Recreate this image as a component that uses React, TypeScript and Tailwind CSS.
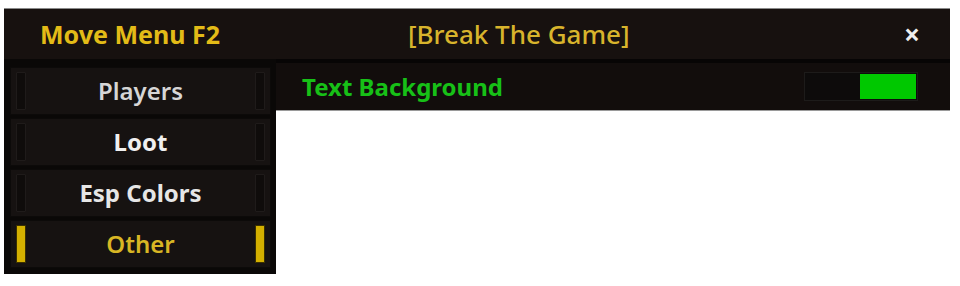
import React from "react";

const items = [
  { label: "Players", active: false, cls: "font-semibold text-[#d6d6d6]" },
  { label: "Loot", active: false, cls: "font-bold text-[#f0f0f0]" },
  { label: "Esp Colors", active: false, cls: "font-bold text-[#e6e6e6]" },
  { label: "Other", active: true, cls: "font-semibold text-[#d8b624]" },
];

function Bar({ active }: { active: boolean }) {
  return (
    <div
      className={
        active
          ? "w-[10px] h-[38px] bg-[#d4b000] border border-[#3a3000] rounded-[1px]"
          : "w-[10px] h-[38px] bg-[#0f0c0b] border border-[#1f1b1a] rounded-[1px]"
      }
    />
  );
}

export default function App() {
  return (
    <div className="w-[960px] h-[286px] bg-white pt-[8px] pl-[4px] font-['Noto_Sans',sans-serif]">
      <div className="w-[946px] border-t border-[#8a8a8a]">
        <div className="h-[50px] bg-[#17110f] flex items-center relative">
          <span className="ml-[36px] text-[25px] font-bold text-[#e3bb17] leading-none">
            Move Menu F2
          </span>
          <span className="ml-[188px] text-[26px] text-[#d8b42c] font-medium leading-none">
            [Break The Game]
          </span>
          <span className="ml-auto mr-[30px] text-[28px] font-bold text-[#eeeeee] leading-none">
            ×
          </span>
        </div>
        <div className="flex items-start">
          <div className="w-[272px] bg-[#0a0807] pt-[8px] pb-[6px] pl-[6px] pr-[5px] flex flex-col gap-[3px]">
            {items.map((it) => (
              <div
                key={it.label}
                className="h-[48px] bg-[#161211] border border-[#0c0a09] flex items-center justify-between px-[5px]"
              >
                <Bar active={it.active} />
                <span className={"text-[24px] leading-none " + it.cls}>{it.label}</span>
                <Bar active={it.active} />
              </div>
            ))}
          </div>
          <div className="flex-1 border-t-[4px] border-[#070505] bg-[#120d0c] h-[52px] flex items-center border-b border-b-[#9a9a9a] pl-[26px] pr-[32px]">
            <span className="text-[24px] font-bold text-[#17c017] leading-none">Text Background</span>
            <div className="ml-auto w-[114px] h-[29px] bg-[#0d0b0b] border border-[#1d1b1a] flex justify-end p-[1px]">
              <div className="w-[56px] h-full bg-[#00c800]" />
            </div>
          </div>
        </div>
      </div>
    </div>
  );
}
